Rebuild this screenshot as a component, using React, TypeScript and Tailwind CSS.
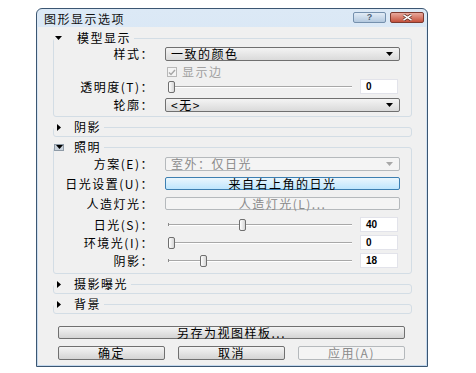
import React from "react";

function DownTri({ color = "#000" }: { color?: string }) {
  return (
    <svg width="7" height="4" viewBox="0 0 7 4" className="block">
      <polygon points="0,0 7,0 3.5,4" fill={color} />
    </svg>
  );
}

function RightTri() {
  return (
    <svg width="4" height="7" viewBox="0 0 4 7" className="block">
      <polygon points="0,0 4,3.5 0,7" fill="#000" />
    </svg>
  );
}

function Group({
  icon,
  title,
  children,
  className,
  textGap,
}: {
  icon: React.ReactNode;
  title: string;
  children?: React.ReactNode;
  className: string;
  textGap: string;
}) {
  return (
    <fieldset className={"w-[359px] border border-[#d3dde5] rounded-[3px] " + className}>
      <legend className="h-[14px] flex items-center pr-[3px] bg-[#f0f0f0]">
        <div className={"flex items-center " + textGap}>{icon}</div>
        <span className="leading-[14px]">{title}</span>
      </legend>
      {children}
    </fieldset>
  );
}

function Row({
  label,
  children,
  className,
}: {
  label: string;
  children: React.ReactNode;
  className: string;
}) {
  return (
    <div className={"flex items-center " + className}>
      <div className="w-[100px] text-right leading-none whitespace-nowrap">{label}</div>
      <div className="ml-[11px] flex items-center">{children}</div>
    </div>
  );
}

function Select({ text, disabled }: { text: string; disabled?: boolean }) {
  return (
    <div
      className={
        disabled
          ? "w-[235px] h-[14px] rounded-[2px] border border-[#b5b9bc] bg-[#f4f4f4] flex items-center pl-[5px] pr-[6px] text-[#8a8a8a]"
          : "w-[235px] h-[14px] rounded-[2px] border border-[#707070] bg-linear-to-b from-[#f4f4f4] to-[#dadada] flex items-center pl-[5px] pr-[6px]"
      }
    >
      <span className="leading-none">{text}</span>
      <div className="ml-auto">
        <DownTri color={disabled ? "#a8a8a8" : "#000"} />
      </div>
    </div>
  );
}

function Slider({ value, tick }: { value: number; tick?: boolean }) {
  const left = Math.round((value / 100) * (184 - 7));
  return (
    <div className="relative w-[184px] h-[14px] ml-[3px]">
      <div className="absolute left-0 right-0 top-[6px] h-[2px] border-t border-t-[#a8a8a8] border-b border-b-white" />
      {tick && <div className="absolute left-0 top-[5px] w-px h-[3px] bg-[#8a8a8a]" />}
      <div
        className="absolute top-[1px] w-[7px] h-[12px] rounded-[2px] border border-[#6f6f6f] bg-linear-to-r from-white to-[#d6d6d6]"
        style={{ left }}
      />
    </div>
  );
}

function NumBox({ value }: { value: string }) {
  return (
    <div className="ml-[8px] w-[38px] h-[15px] bg-white border border-[#e2e3ea] flex items-center pl-[5px] font-['Liberation_Sans',sans-serif] font-bold text-[10px] tracking-normal leading-none">
      {value}
    </div>
  );
}

export default function App() {
  return (
    <div className="w-[476px] h-[373px] bg-white pt-[8px] pl-[36px] font-['Noto_Sans_CJK_SC','Noto_Sans',sans-serif] text-[12px] tracking-[1.5px] text-black">
      <div className="w-[392px] h-[359px] rounded-t-[6px] border border-[#3b5672] bg-linear-to-b from-[#dce9f6] to-[#c4d8ed] flex flex-col">
        {/* title bar */}
        <div className="h-[18px] flex pl-[7px] pr-[3px]">
          <span className="mt-[4px] text-[12px] leading-[12px] text-[#111]">图形显示选项</span>
          <div className="ml-auto mt-[3px] flex gap-[4px]">
            <div className="w-[33px] h-[11px] rounded-[2px] border border-[#7590ad] bg-linear-to-b from-[#e2ecf6] to-[#b4c9df] flex items-center justify-center">
              <span className="font-['Liberation_Sans',sans-serif] font-bold text-[9px] leading-none tracking-normal text-[#4e5f72]">?</span>
            </div>
            <div className="w-[34px] h-[11px] rounded-[2px] border border-[#7d3a30] bg-linear-to-b from-[#e8a89c] to-[#c4503c] flex items-center justify-center">
              <svg width="11" height="7" viewBox="0 0 11 7">
                <path d="M1.5 0.8 L9.5 6.2 M9.5 0.8 L1.5 6.2" stroke="#5a2a22" strokeWidth="3" />
                <path d="M1.5 0.8 L9.5 6.2 M9.5 0.8 L1.5 6.2" stroke="#ffffff" strokeWidth="1.6" />
              </svg>
            </div>
          </div>
        </div>

        {/* body */}
        <div className="flex-1 mx-[1px] mb-[1px] bg-[#f0f0f0] flex flex-col pl-[15px]">
          <Group
            className="mt-[4px] pb-[4px]"
            textGap="w-[23px] pl-[1px]"
            icon={<DownTri />}
            title="模型显示"
          >
            <Row label="样式：" className="mt-[2px]">
              <Select text="一致的颜色" />
            </Row>
            <div className="flex items-center mt-[6px] ml-[113px] h-[10px]">
              <div className="w-[10px] h-[10px] border border-[#b8b8b8] bg-[#f4f4f4] flex items-center justify-center">
                <svg width="8" height="7" viewBox="0 0 8 7">
                  <path d="M1 3.5 L3 5.5 L7 1" stroke="#a6a6a6" strokeWidth="1.4" fill="none" />
                </svg>
              </div>
              <span className="ml-[5px] text-[#a0a0a0] leading-none">显示边</span>
            </div>
            <Row label="透明度(T)：" className="mt-[2px]">
              <Slider value={0} />
              <NumBox value="0" />
            </Row>
            <Row label="轮廓：" className="mt-[4px]">
              <Select text="<无>" />
            </Row>
          </Group>

          <Group className="mt-[3px] h-[17px]" textGap="w-[20px] pl-[3px]" icon={<RightTri />} title="阴影" />

          <Group
            className="mt-[3px] pb-[5px]"
            textGap="w-[20px]"
            icon={
              <div className="w-[10px] h-[7px] border border-[#8e9aa6] bg-[#c9d2dc] flex items-center justify-center">
                <DownTri />
              </div>
            }
            title="照明"
          >
            <Row label="方案(E)：" className="mt-[3px]">
              <Select text="室外：仅日光" disabled />
            </Row>
            <Row label="日光设置(U)：" className="mt-[6px]">
              <div className="w-[235px] h-[13px] rounded-[2px] border border-[#3c7fb1] bg-linear-to-b from-[#eaf6fd] to-[#bee6fd] flex items-center justify-center leading-none">
                来自右上角的日光
              </div>
            </Row>
            <Row label="人造灯光：" className="mt-[7px]">
              <div className="w-[235px] h-[13px] rounded-[2px] border border-[#b5b9bc] bg-[#f4f4f4] flex items-center justify-center leading-none text-[#8a8a8a]">
                人造灯光(L)...
              </div>
            </Row>
            <Row label="日光(S)：" className="mt-[7px]">
              <Slider value={40} tick />
              <NumBox value="40" />
            </Row>
            <Row label="环境光(I)：" className="mt-[3px]">
              <Slider value={0} />
              <NumBox value="0" />
            </Row>
            <Row label="阴影：" className="mt-[3px]">
              <Slider value={18} tick />
              <NumBox value="18" />
            </Row>
          </Group>

          <Group className="mt-[3px] h-[17px]" textGap="w-[20px] pl-[3px]" icon={<RightTri />} title="摄影曝光" />
          <Group className="mt-[3px] h-[17px]" textGap="w-[20px] pl-[3px]" icon={<RightTri />} title="背景" />

          <div className="mt-[12px] ml-[5px] w-[347px] h-[13px] rounded-[2px] border border-[#707070] bg-linear-to-b from-[#f4f4f4] to-[#d4d4d4] flex items-center justify-center leading-none">
            另存为视图样板...
          </div>

          <div className="mt-[7px] ml-[5px] flex gap-[13px]">
            <div className="w-[107px] h-[14px] rounded-[2px] border border-[#707070] bg-linear-to-b from-[#f4f4f4] to-[#d4d4d4] flex items-center justify-center leading-none">
              确定
            </div>
            <div className="w-[107px] h-[14px] rounded-[2px] border border-[#707070] bg-linear-to-b from-[#f4f4f4] to-[#d4d4d4] flex items-center justify-center leading-none">
              取消
            </div>
            <div className="w-[107px] h-[14px] rounded-[2px] border border-[#b5b9bc] bg-[#f4f4f4] flex items-center justify-center leading-none text-[#8a8a8a]">
              应用(A)
            </div>
          </div>
        </div>
      </div>
    </div>
  );
}
